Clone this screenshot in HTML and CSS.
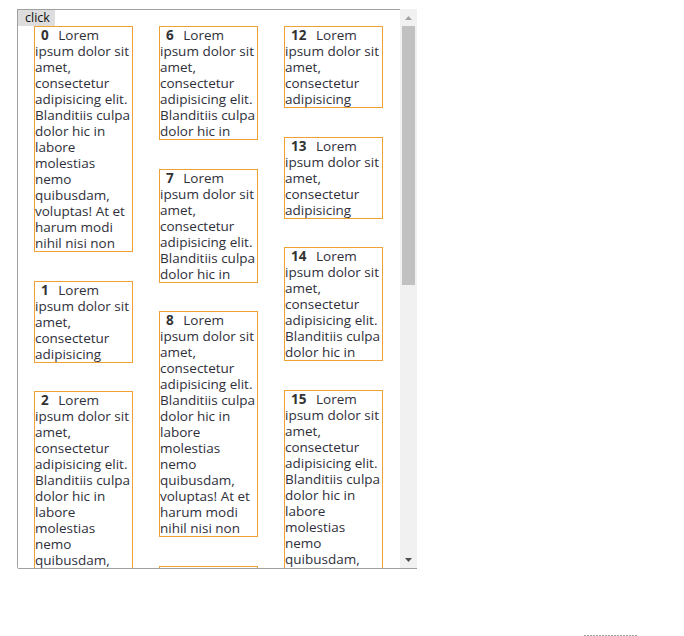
FILE: index.html
```html
<!DOCTYPE html>
<html>
<head>
<meta charset="utf-8">
<title>Columns</title>
<link rel="stylesheet" href="styles.css">
</head>
<body>
<div class="frame">
  <div class="viewport">
    <button class="btn">click</button>
    <div class="grid">
      <div class="col">
        <div class="item"><b class="num">0</b> Lorem ipsum dolor sit amet, consectetur adipisicing elit. Blanditiis culpa dolor hic in labore molestias nemo quibusdam, voluptas! At et harum modi nihil nisi non</div>
        <div class="item"><b class="num">1</b> Lorem ipsum dolor sit amet, consectetur adipisicing</div>
        <div class="item"><b class="num">2</b> Lorem ipsum dolor sit amet, consectetur adipisicing elit. Blanditiis culpa dolor hic in labore molestias nemo quibusdam, voluptas! At et harum modi nihil nisi non</div>
        <div class="item"><b class="num">3</b> Lorem ipsum dolor sit amet, consectetur adipisicing elit. Blanditiis culpa dolor hic in</div>
        <div class="item"><b class="num">4</b> Lorem ipsum dolor sit amet, consectetur adipisicing elit. Blanditiis culpa dolor hic in labore molestias nemo quibusdam, voluptas! At et harum modi nihil nisi non</div>
        <div class="item"><b class="num">5</b> Lorem ipsum dolor sit amet, consectetur adipisicing</div>
      </div>
      <div class="col">
        <div class="item"><b class="num">6</b> Lorem ipsum dolor sit amet, consectetur adipisicing elit. Blanditiis culpa dolor hic in</div>
        <div class="item"><b class="num">7</b> Lorem ipsum dolor sit amet, consectetur adipisicing elit. Blanditiis culpa dolor hic in</div>
        <div class="item"><b class="num">8</b> Lorem ipsum dolor sit amet, consectetur adipisicing elit. Blanditiis culpa dolor hic in labore molestias nemo quibusdam, voluptas! At et harum modi nihil nisi non</div>
        <div class="item"><b class="num">9</b> Lorem ipsum dolor sit amet, consectetur adipisicing elit. Blanditiis culpa dolor hic in labore molestias nemo quibusdam, voluptas! At et harum modi nihil nisi non</div>
        <div class="item"><b class="num">10</b> Lorem ipsum dolor sit amet, consectetur adipisicing</div>
        <div class="item"><b class="num">11</b> Lorem ipsum dolor sit amet, consectetur adipisicing elit. Blanditiis culpa dolor hic in</div>
      </div>
      <div class="col">
        <div class="item"><b class="num">12</b> Lorem ipsum dolor sit amet, consectetur adipisicing</div>
        <div class="item"><b class="num">13</b> Lorem ipsum dolor sit amet, consectetur adipisicing</div>
        <div class="item"><b class="num">14</b> Lorem ipsum dolor sit amet, consectetur adipisicing elit. Blanditiis culpa dolor hic in</div>
        <div class="item"><b class="num">15</b> Lorem ipsum dolor sit amet, consectetur adipisicing elit. Blanditiis culpa dolor hic in labore molestias nemo quibusdam, voluptas! At et harum modi nihil nisi non</div>
        <div class="item"><b class="num">16</b> Lorem ipsum dolor sit amet, consectetur adipisicing elit. Blanditiis culpa dolor hic in</div>
        <div class="item"><b class="num">17</b> Lorem ipsum dolor sit amet, consectetur adipisicing elit. Blanditiis culpa dolor hic in labore molestias nemo quibusdam, voluptas! At et harum modi nihil nisi non</div>
      </div>
    </div>
  </div>
  <div class="sbar">
    <div class="sb-btn">
      <svg width="7" height="4" viewBox="0 0 7 4"><polygon points="3.5,0 7,4 0,4" fill="#a3a3a3"/></svg>
    </div>
    <div class="sb-track"><div class="sb-thumb"></div></div>
    <div class="sb-btn">
      <svg width="7" height="4" viewBox="0 0 7 4"><polygon points="0,0 7,0 3.5,4" fill="#505050"/></svg>
    </div>
  </div>
</div>
<div class="dash"></div>
</body>
</html>
```

FILE: styles.css
```css
html, body {
  margin: 0;
  padding: 0;
  background: #fff;
}

body {
  font-family: "Open Sans", "Noto Sans", sans-serif;
  font-size: 13.5px;
  line-height: 16px;
  color: #2f2f3a;
}

.frame {
  display: flex;
  width: 400px;
  height: 559px;
  margin: 9px 0 0 17px;
  box-shadow: inset 1px 1px 0 #a0a0a0, 0 1px 0 #a0a0a0;
  border-bottom-left-radius: 2px;
}

.viewport {
  flex: 1;
  min-width: 0;
  overflow: hidden;
  padding: 1px 0 0 1px;
}

.sbar {
  width: 17px;
  flex: none;
  display: flex;
  flex-direction: column;
  background: #f1f1f1;
}

.sb-btn {
  height: 17px;
  flex: none;
  display: flex;
  align-items: center;
  justify-content: center;
}

.sb-btn svg {
  display: block;
}

.sb-track {
  flex: 1;
  padding: 0 2px;
}

.sb-thumb {
  height: 259px;
  background: #c1c1c1;
}

.btn {
  display: block;
  box-sizing: border-box;
  width: 37px;
  height: 16px;
  margin: 0;
  padding: 0 0 0 7px;
  border: 0;
  background: #dddddd;
  color: #111;
  font-family: inherit;
  font-size: 12.5px;
  line-height: 16px;
  text-align: left;
}

.grid {
  display: grid;
  grid-template-columns: repeat(3, 99px);
  column-gap: 26px;
  padding-left: 16px;
  align-items: start;
}

.col {
  display: flex;
  flex-direction: column;
}

.item {
  box-sizing: border-box;
  border: 1px solid #f0a135;
  margin-bottom: 28.5px;
}

.num {
  padding: 0 6px;
  font-weight: 700;
  color: #333;
}

.dash {
  width: 53px;
  height: 1px;
  margin: 67px 0 0 584px;
  background: repeating-linear-gradient(90deg, #a0a0a0 0 2px, transparent 2px 3px);
}
```
